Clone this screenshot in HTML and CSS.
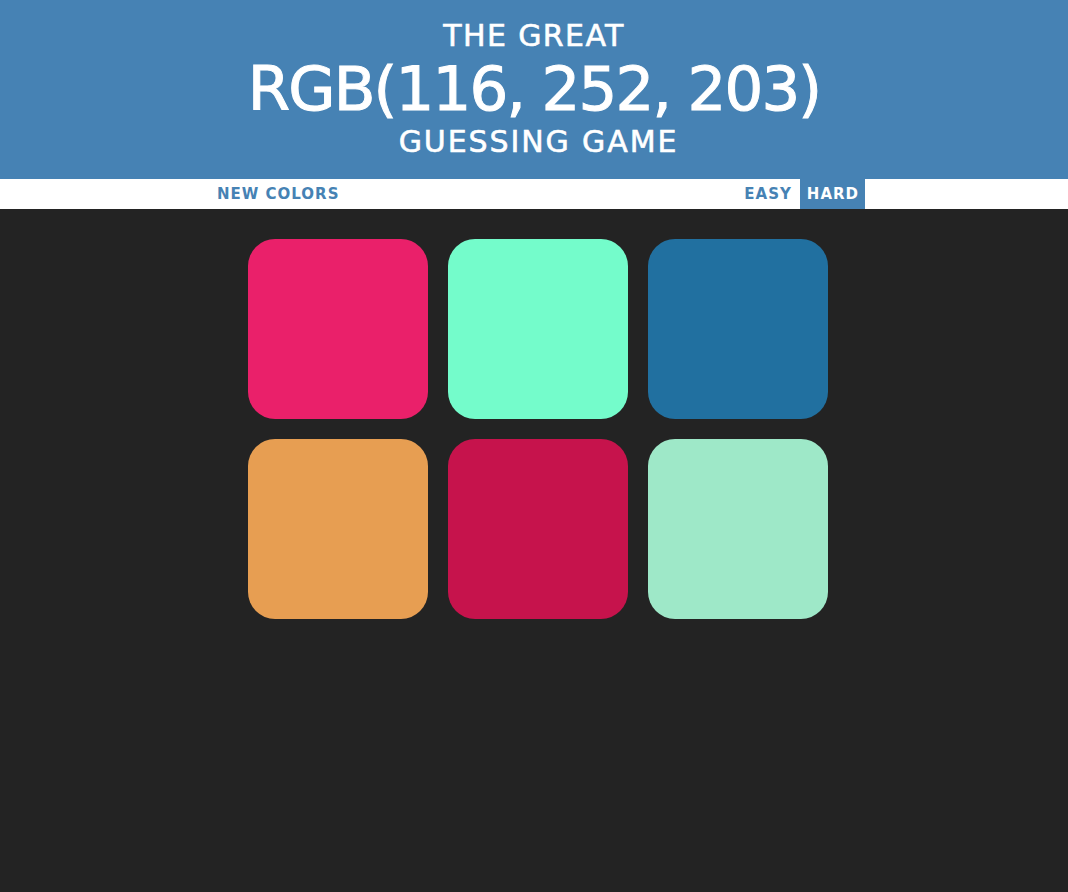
FILE: index.html
```html
<!DOCTYPE html>
<html>
<head>
<meta charset="utf-8">
<link rel="stylesheet" href="styles.css">
</head>
<body>
<h1 class="title">
  <span class="line small">THE GREAT</span>
  <span class="line big">RGB(116, 252, 203)</span>
  <span class="line small wide">GUESSING GAME</span>
</h1>
<div class="stripe">
  <div class="stripe-inner">
    <button class="btn">NEW COLORS</button>
    <span class="message"></span>
    <div class="modes">
      <button class="btn">EASY</button>
      <button class="btn selected">HARD</button>
    </div>
  </div>
</div>
<div class="container">
  <div class="square" style="background: rgb(234, 32, 106)"></div>
  <div class="square" style="background: rgb(116, 252, 203)"></div>
  <div class="square" style="background: rgb(33, 112, 160)"></div>
  <div class="square" style="background: rgb(231, 158, 82)"></div>
  <div class="square" style="background: rgb(198, 19, 76)"></div>
  <div class="square" style="background: rgb(158, 232, 200)"></div>
</div>
</body>
</html>
```
FILE: styles.css
```css
html, body {
  margin: 0;
  padding: 0;
}
body {
  background: #232323;
  font-family: "DejaVu Sans", "Open Sans", sans-serif;
  min-height: 892px;
}
.title {
  margin: 0;
  background: #4682b4;
  color: #ffffff;
  text-align: center;
  padding: 18px 0 14px;
  height: 179px;
  box-sizing: border-box;
  -webkit-text-stroke: 0.6px #ffffff;
}
.line {
  display: block;
  font-weight: normal;
}
.small {
  font-size: 30px;
  line-height: 36px;
  letter-spacing: 1.4px;
}
.small.wide {
  letter-spacing: 1.9px;
  padding-left: 9px;
}
.big {
  font-size: 61px;
  line-height: 70px;
  letter-spacing: -1.85px;
  -webkit-text-stroke: 1px #ffffff;
}
.stripe {
  background: #ffffff;
  height: 30px;
}
.stripe-inner {
  width: 662px;
  height: 30px;
  margin: 0 auto;
  display: flex;
  align-items: stretch;
}
.btn {
  border: none;
  background: none;
  color: #4682b4;
  font-family: "DejaVu Sans", sans-serif;
  font-weight: bold;
  font-size: 15px;
  text-transform: uppercase;
  padding: 0 6px 0 7px;
  letter-spacing: 1px;
  height: 30px;
  cursor: pointer;
}
.stripe-inner > .btn {
  padding-left: 14px;
}
.message {
  flex: 1;
}
.modes {
  display: flex;
  gap: 2px;
}
.selected {
  background: #4682b4;
  color: #ffffff;
}
.container {
  width: 580px;
  margin: 30px 0 0 calc(50% - 286px);
  display: grid;
  grid-template-columns: repeat(3, 180px);
  grid-auto-rows: 180px;
  gap: 20px;
}
.square {
  border-radius: 27px;
}
```
